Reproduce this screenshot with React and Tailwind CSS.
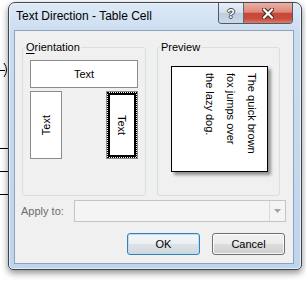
import React from "react";

const TextDirectionDialog = () => {
  return (
    <div className="relative flex h-[268px] w-[294px] flex-col rounded-t-[7px] rounded-b-[5px] border border-[#3d4652] bg-[linear-gradient(180deg,#dde9f6_0%,#cadcf0_12%,#bfd5ec_100%)] shadow-[inset_0_0_0_1px_rgba(255,255,255,0.55),0_3px_7px_rgba(0,0,0,0.45)]">
      {/* Title bar */}
      <div className="flex h-[27px] items-start justify-between">
        <span className="ml-[7px] mt-[6px] text-[12px] leading-[14px]">
          Text Direction - Table Cell
        </span>
        <div className="mr-[8px] flex h-[21px] overflow-hidden rounded-b-[4px] border border-t-0 border-[#4f5a68]">
          <div className="flex w-[25px] items-center justify-center border-r border-[#5d6878] bg-[linear-gradient(180deg,#e8eff7_0%,#d5e0ec_48%,#bfcddf_52%,#cbd8e8_100%)] text-[13px] font-bold leading-none text-white [text-shadow:1px_0_#3c4650,-1px_0_#3c4650,0_1px_#3c4650,0_-1px_#3c4650]">
            ?
          </div>
          <div className="flex w-[48px] items-center justify-center bg-[linear-gradient(180deg,#ecb0a4_0%,#dd8878_46%,#c8473a_52%,#c84c3c_78%,#de7a66_100%)]">
            <svg width="12" height="11" viewBox="0 0 12 11">
              <path d="M2 1.5 L10 9.5 M10 1.5 L2 9.5" stroke="#3b2826" strokeWidth="4.2" strokeLinecap="square" />
              <path d="M2 1.5 L10 9.5 M10 1.5 L2 9.5" stroke="#ffffff" strokeWidth="2.2" strokeLinecap="square" />
            </svg>
          </div>
        </div>
      </div>

      {/* Client area */}
      <div className="ml-[5px] flex h-[234px] w-[280px] flex-col border border-[#8ea3bb] bg-[#f0f0f0] text-[11px]">
        <div className="ml-[7px] mt-[10px] flex gap-[11px]">
          <fieldset className="h-[155px] w-[124px] rounded-[3px] border border-[#d5dfe5]">
            <legend className="ml-[2px] px-[1px] leading-[13px]">
              <span className="underline underline-offset-2">O</span>rientation
            </legend>
            <div className="px-[7px] pt-[6px]">
              <div className="flex h-[28px] items-center justify-center border border-[#8c8c8c] bg-white">
                Text
              </div>
              <div className="mt-[3px] flex justify-between">
                <div className="flex h-[68px] w-[32px] items-center justify-center border border-[#8c8c8c] bg-white">
                  <span className="rotate-180 [writing-mode:vertical-rl]">Text</span>
                </div>
                <div className="h-[68px] w-[32px] border border-[#8c8c8c]">
                  <div className="h-full border border-dotted border-black">
                    <div className="flex h-full items-center justify-center border-2 border-black bg-white">
                      <span className="[writing-mode:vertical-rl]">Text</span>
                    </div>
                  </div>
                </div>
              </div>
            </div>
          </fieldset>

          <fieldset className="h-[155px] w-[123px] rounded-[3px] border border-[#d5dfe5]">
            <legend className="ml-[2px] px-[1px] leading-[13px]">Preview</legend>
            <div className="pl-[13px] pt-[12px]">
              <div className="h-[106px] w-[97px] border border-black bg-white pr-[5px] pt-[6px] shadow-[3px_3px_3px_rgba(0,0,0,0.4)]">
                <p className="h-full w-full whitespace-nowrap leading-[21px] [writing-mode:vertical-rl]">
                  The quick brown
                  <br />
                  fox jumps over
                  <br />
                  the lazy dog.
                </p>
              </div>
            </div>
          </fieldset>
        </div>

        {/* Apply to */}
        <div className="mt-[4px] flex h-[22px] items-center justify-between pl-[6px] pr-[7px]">
          <span className="text-[#6d6d6d]">Apply to:</span>
          <div className="flex h-full w-[212px] border border-[#c5c5c5] bg-[#f4f4f4]">
            <div className="flex-1" />
            <div className="flex w-[16px] items-center justify-center border-l border-[#dadada]">
              <svg width="7" height="4" viewBox="0 0 7 4">
                <path d="M0 0h7L3.5 4z" fill="#a3a3a3" />
              </svg>
            </div>
          </div>
        </div>

        {/* Action Buttons */}
        <div className="mt-[11px] flex justify-end gap-[12px] pr-[8px]">
          <button className="h-[22px] w-[73px] rounded-[3px] border border-[#3c7fb1] bg-[linear-gradient(180deg,#f4f7f9_0%,#ebeff2_50%,#dde3e7_50%,#d1d8dd_100%)] shadow-[inset_0_0_0_1px_#b4e0f6]">
            OK
          </button>
          <button className="h-[22px] w-[73px] rounded-[3px] border border-[#707070] bg-[linear-gradient(180deg,#f2f2f2_0%,#ebebeb_50%,#dddddd_50%,#cfcfcf_100%)] shadow-[inset_0_0_0_1px_rgba(255,255,255,0.8)]">
            Cancel
          </button>
        </div>
      </div>
    </div>
  );
};

export default function App() {
  return (
    <div className="relative h-[282px] w-[306px] overflow-hidden bg-white pl-[8px] pt-[2px] font-['Liberation_Sans',Arial,sans-serif] text-black">
      {/* document behind the dialog */}
      <div className="absolute left-0 top-[70px] h-px w-[5px] bg-black" />
      <svg className="absolute left-[3px] top-[62px]" width="6" height="16" viewBox="0 0 6 16">
        <path d="M1 1 Q6 8 1 15" stroke="#000" fill="none" />
      </svg>
      <div className="absolute left-0 top-[148px] h-px w-[9px] bg-black" />
      <div className="absolute left-0 top-[171px] h-px w-[9px] bg-black" />
      <div className="absolute left-0 top-[194px] h-px w-[9px] bg-black" />

      <TextDirectionDialog />
    </div>
  );
}
